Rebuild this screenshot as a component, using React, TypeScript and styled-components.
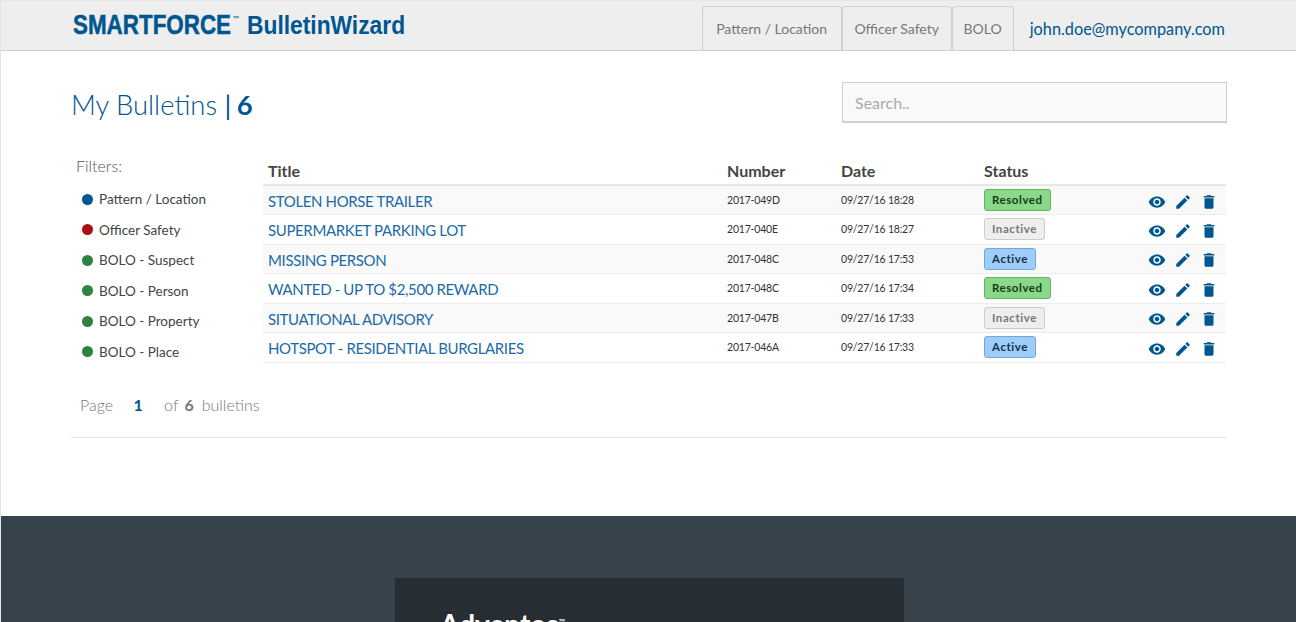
import React from "react";
import styled, { createGlobalStyle } from "styled-components";
import { MdVisibility, MdEdit, MdDelete } from "react-icons/md";

const BLUE = "#00568f";
const FONT = `"Lato", "Noto Sans", sans-serif`;

type Status = "Resolved" | "Inactive" | "Active";

const filters = [
  { label: "Pattern / Location", color: "#00568f" },
  { label: "Officer Safety", color: "#a90f14" },
  { label: "BOLO - Suspect", color: "#2d8340" },
  { label: "BOLO - Person", color: "#2d8340" },
  { label: "BOLO - Property", color: "#2d8340" },
  { label: "BOLO - Place", color: "#2d8340" },
];

const bulletins: { title: string; number: string; date: string; status: Status }[] = [
  { title: "STOLEN HORSE TRAILER", number: "2017-049D", date: "09/27/16 18:28", status: "Resolved" },
  { title: "SUPERMARKET PARKING LOT", number: "2017-040E", date: "09/27/16 18:27", status: "Inactive" },
  { title: "MISSING PERSON", number: "2017-048C", date: "09/27/16 17:53", status: "Active" },
  { title: "WANTED - UP TO $2,500 REWARD", number: "2017-048C", date: "09/27/16 17:34", status: "Resolved" },
  { title: "SITUATIONAL ADVISORY", number: "2017-047B", date: "09/27/16 17:33", status: "Inactive" },
  { title: "HOTSPOT - RESIDENTIAL BURGLARIES", number: "2017-046A", date: "09/27/16 17:33", status: "Active" },
];

export default function App() {
  return (
    <>
      <GlobalStyle />
      <Page>
        <Header>
          <Logo>
            <Brand>SMARTFORCE</Brand>
            <Tm>™</Tm>
            <Product>BulletinWizard</Product>
          </Logo>
          <Nav>
            <Tab $width={140}>Pattern / Location</Tab>
            <Tab $width={110}>Officer Safety</Tab>
            <Tab $width={62}>BOLO</Tab>
            <UserLink>john.doe@mycompany.com</UserLink>
          </Nav>
        </Header>

        <Main>
          <TopRow>
            <Heading>
              My Bulletins <Divider>|</Divider> <b>6</b>
            </Heading>
            <Search placeholder="Search.." />
          </TopRow>

          <Columns>
            <FilterList>
              <FilterTitle>Filters:</FilterTitle>
              {filters.map((f) => (
                <FilterItem key={f.label}>
                  <Dot $color={f.color} />
                  {f.label}
                </FilterItem>
              ))}
            </FilterList>

            <Table>
              <thead>
                <tr>
                  <HeadCell $width={459}>Title</HeadCell>
                  <HeadCell $width={114}>Number</HeadCell>
                  <HeadCell $width={143}>Date</HeadCell>
                  <HeadCell $width={160}>Status</HeadCell>
                  <HeadCell />
                </tr>
              </thead>
              <tbody>
                {bulletins.map((b) => (
                  <Row key={b.title}>
                    <TitleCell>{b.title}</TitleCell>
                    <SmallCell>{b.number}</SmallCell>
                    <SmallCell>{b.date}</SmallCell>
                    <BadgeCell>
                      <Badge $status={b.status}>{b.status}</Badge>
                    </BadgeCell>
                    <Cell>
                      <Actions>
                        <MdVisibility size={18} />
                        <MdEdit size={18} />
                        <MdDelete size={18} />
                      </Actions>
                    </Cell>
                  </Row>
                ))}
              </tbody>
            </Table>
          </Columns>

          <Pager>
            Page <PageNum>1</PageNum> of <PageTotal>6</PageTotal>
            <PagerLabel>bulletins</PagerLabel>
          </Pager>
        </Main>

        <Footer>
          <FooterCard>
            <FooterBrand>
              Adventos<sup>™</sup>
            </FooterBrand>
          </FooterCard>
        </Footer>
      </Page>
    </>
  );
}

const GlobalStyle = createGlobalStyle`
  html, body {
    margin: 0;
    padding: 0;
    background: #fff;
  }
  body {
    font-family: ${FONT};
  }
`;

const Page = styled.div`
  height: 622px;
  overflow: hidden;
  border-left: 1px solid #e4e4e4;
`;

const Header = styled.header`
  height: 51px;
  box-sizing: border-box;
  background: #eeeeee;
  border-top: 1px solid #e6e6e6;
  border-bottom: 1px solid #cfcfcf;
  display: flex;
  justify-content: space-between;
  padding: 0 71px 0 73px;
  margin-left: -1px;
`;

const Logo = styled.div`
  display: flex;
  align-items: center;
  color: ${BLUE};
  padding-bottom: 1px;
`;

const Brand = styled.span`
  font-family: "Liberation Sans", sans-serif;
  font-weight: 700;
  font-size: 28px;
  width: 157px;
  display: inline-block;
  -webkit-text-stroke: 0.5px ${BLUE};
  transform: scaleX(0.8);
  transform-origin: left center;
`;

const Tm = styled.span`
  font-size: 8px;
  margin: -12px 8px 0 3px;
`;

const Product = styled.span`
  font-family: "Liberation Sans", sans-serif;
  font-weight: 700;
  font-size: 26.5px;
  width: 157px;
  display: inline-block;
  white-space: nowrap;
  transform: scaleX(0.86);
  transform-origin: left center;
`;

const Nav = styled.nav`
  display: flex;
  align-items: flex-end;
`;

const Tab = styled.a<{ $width: number }>`
  width: ${(p) => p.$width}px;
  height: 44px;
  box-sizing: border-box;
  display: flex;
  align-items: center;
  justify-content: center;
  font-size: 14px;
  color: #777;
  border: 1px solid #cfcfcf;
  border-bottom: 0;
  border-radius: 4px 4px 0 0;
`;

const UserLink = styled.a`
  height: 44px;
  display: flex;
  align-items: center;
  padding: 1px 0 0 16px;
  box-sizing: border-box;
  font-size: 16.3px;
  color: ${BLUE};
`;

const Main = styled.main`
  height: 465px;
  box-sizing: border-box;
  padding: 31px 69px 0 70px;
`;

const TopRow = styled.div`
  display: flex;
  justify-content: space-between;
  align-items: flex-start;
`;

const Heading = styled.h1`
  margin: 3px 0 0;
  font-size: 27.4px;
  line-height: 40px;
  font-weight: 300;
  color: ${BLUE};
  b {
    font-weight: 700;
  }
`;

const Divider = styled.span`
  font-weight: 400;
  margin-right: -2px;
`;

const Search = styled.input`
  width: 385px;
  height: 41px;
  box-sizing: border-box;
  padding: 0 12px;
  background: #f9f9f9;
  border: 1px solid #cfcfcf;
  border-bottom-width: 2px;
  font-family: ${FONT};
  font-size: 16px;
  &::placeholder {
    color: #aaa;
  }
`;

const Columns = styled.div`
  display: flex;
  margin-top: 30px;
  margin-right: 1px;
`;

const FilterList = styled.div`
  width: 192px;
  flex-shrink: 0;
  padding: 0 0 0 5px;
  box-sizing: border-box;
`;

const FilterTitle = styled.div`
  font-size: 16px;
  font-weight: 300;
  line-height: 20px;
  color: #555;
  margin-top: 1px;
  margin-bottom: 8px;
`;

const FilterItem = styled.div`
  display: flex;
  align-items: center;
  gap: 6px;
  height: 30.5px;
  padding-left: 6px;
  font-size: 13.5px;
  color: #444;
`;

const Dot = styled.span<{ $color: string }>`
  width: 11px;
  height: 11px;
  border-radius: 50%;
  background: ${(p) => p.$color};
`;

const Table = styled.table`
  flex: 1;
  table-layout: fixed;
  border-collapse: collapse;
  align-self: flex-start;
`;

const HeadCell = styled.th<{ $width?: number }>`
  ${(p) => (p.$width ? `width: ${p.$width}px;` : "")}
  height: 30px;
  padding: 2px 5px 0;
  box-sizing: border-box;
  text-align: left;
  font-size: 16px;
  font-weight: 700;
  color: #444;
  border-bottom: 2px solid #e8e8e8;
`;

const Row = styled.tr`
  height: 29.5px;
  border-bottom: 1px solid #ececec;
  &:nth-child(odd) {
    background: #f9f9f9;
  }
`;

const Cell = styled.td`
  padding: 0 5px;
`;

const BadgeCell = styled(Cell)`
  padding-bottom: 1px;
`;

const TitleCell = styled(Cell)`
  padding-top: 2px;
  font-size: 15px;
  letter-spacing: -0.37px;
  color: #1a6aa5;
`;

const SmallCell = styled(Cell)`
  font-size: 10.5px;
  letter-spacing: -0.2px;
  color: #333;
`;

const badgeColors: Record<Status, { bg: string; border: string; text: string }> = {
  Resolved: { bg: "#8bd88b", border: "#5cb85c", text: "#123d12" },
  Inactive: { bg: "#eeeeee", border: "#cccccc", text: "#777777" },
  Active: { bg: "#9fcdf7", border: "#6aa9e4", text: "#12334f" },
};

const Badge = styled.span<{ $status: Status }>`
  display: inline-block;
  padding: 0 7px;
  height: 22px;
  line-height: 20px;
  box-sizing: border-box;
  font-size: 11.5px;
  font-weight: 700;
  letter-spacing: 0.55px;
  border-radius: 3px;
  background: ${(p) => badgeColors[p.$status].bg};
  border: 1px solid ${(p) => badgeColors[p.$status].border};
  color: ${(p) => badgeColors[p.$status].text};
`;

const Actions = styled.div`
  display: flex;
  justify-content: flex-end;
  gap: 8px;
  padding: 3px 3px 0 0;
  color: ${BLUE};
`;

const Pager = styled.div`
  margin: 27.5px 1px 0 0;
  padding: 0 9px 22.5px;
  height: 20px;
  font-size: 16px;
  font-weight: 300;
  color: #777;
  border-bottom: 1px solid #e4e4e4;
`;

const PageNum = styled.b`
  font-weight: 700;
  color: ${BLUE};
  margin: 0 17px 0 16px;
`;

const PageTotal = styled.b`
  font-weight: 700;
  margin-left: 2px;
`;

const PagerLabel = styled.span`
  margin-left: 8px;
`;

const Footer = styled.footer`
  height: 106px;
  margin-left: -1px;
  background: #36434c;
  padding-top: 62px;
  display: flex;
  justify-content: center;
  box-sizing: border-box;
`;

const FooterCard = styled.div`
  width: 509px;
  height: 200px;
  flex-shrink: 0;
  background: #272e33;
  padding: 29px 45px;
  box-sizing: border-box;
  margin-right: -3px;
`;

const FooterBrand = styled.div`
  font-size: 28px;
  font-weight: 700;
  color: #fff;
  sup {
    font-size: 8px;
  }
`;
